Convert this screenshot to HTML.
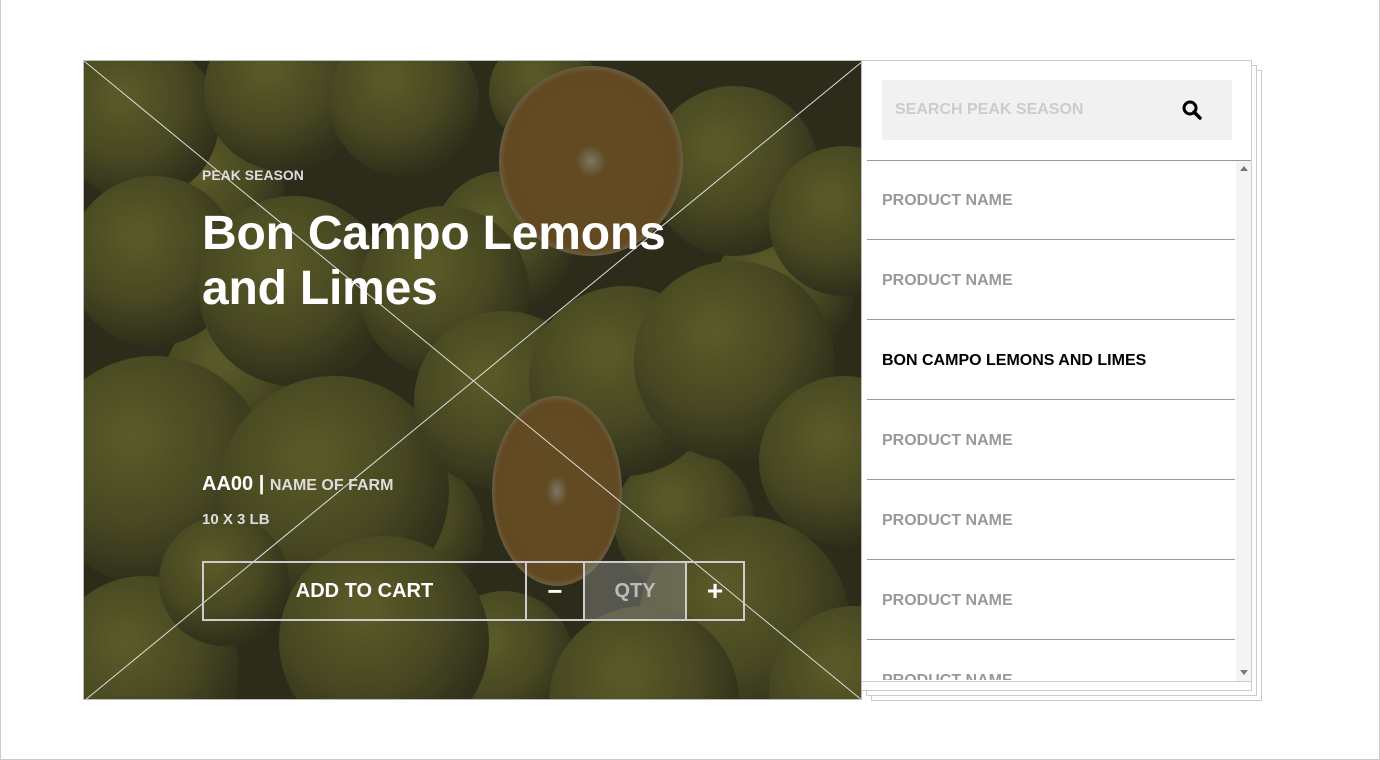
<!DOCTYPE html>
<html><head><meta charset="utf-8"><style>
*{margin:0;padding:0;box-sizing:border-box}
body{width:1380px;height:760px;background:#fff;position:relative;overflow:hidden;font-family:"Liberation Sans",Arial,sans-serif;font-weight:bold}
.frame{position:absolute;left:0;top:0;width:1380px;height:760px;border:1px solid #ccc;border-top:none}
.img{position:absolute;left:83px;top:60px;width:779px;height:640px;overflow:hidden;border:1px solid #bbb}
.t{position:absolute;color:#fff}
.sheet{position:absolute;background:#fff;border:1px solid #ccc}
.row{position:absolute;left:867px;width:368px;height:80px;border-top:1px solid #999;color:#999;font-size:16px;padding:32px 0 0 15px}
</style></head><body>
<div class="frame"></div>
<div class="sheet" style="left:871px;top:70px;width:391px;height:631px"></div>
<div class="sheet" style="left:866px;top:65px;width:391px;height:631px"></div>
<div class="sheet" style="left:861px;top:60px;width:391px;height:631px"></div>
<div class="img">
<svg width="779" height="640" viewBox="0 0 779 640" style="position:absolute;left:0;top:0">
<defs>
<radialGradient id="g" cx="40%" cy="35%" r="65%"><stop offset="0" stop-color="#66662e"/><stop offset="0.6" stop-color="#505026"/><stop offset="1" stop-color="#35351f"/></radialGradient>
<radialGradient id="o" cx="50%" cy="50%" r="55%"><stop offset="0" stop-color="#8a8470"/><stop offset="0.15" stop-color="#6e5428"/><stop offset="0.85" stop-color="#6e5226"/><stop offset="0.95" stop-color="#7a7a66"/><stop offset="1" stop-color="#3a3a28"/></radialGradient>
</defs>
<rect width="779" height="640" fill="#33321f"/>
<g fill="url(#g)">
<circle cx="130" cy="130" r="70"/><circle cx="420" cy="180" r="70"/><circle cx="330" cy="470" r="70"/><circle cx="150" cy="320" r="70"/><circle cx="600" cy="460" r="70"/><circle cx="700" cy="230" r="70"/><circle cx="420" cy="600" r="70"/>
<circle cx="55" cy="60" r="80"/><circle cx="200" cy="30" r="80"/><circle cx="320" cy="40" r="75"/>
<circle cx="650" cy="110" r="85"/><circle cx="760" cy="160" r="75"/><circle cx="70" cy="200" r="85"/>
<circle cx="210" cy="230" r="95"/><circle cx="360" cy="230" r="85"/><circle cx="70" cy="410" r="115"/>
<circle cx="250" cy="430" r="115"/><circle cx="420" cy="340" r="90"/><circle cx="540" cy="320" r="95"/>
<circle cx="650" cy="300" r="100"/><circle cx="760" cy="400" r="85"/><circle cx="300" cy="580" r="105"/>
<circle cx="60" cy="610" r="95"/><circle cx="660" cy="560" r="105"/><circle cx="560" cy="640" r="95"/>
<circle cx="770" cy="630" r="85"/><circle cx="460" cy="30" r="55"/><circle cx="140" cy="520" r="65"/>
</g>
<ellipse cx="507" cy="100" rx="92" ry="95" fill="url(#o)"/>
<ellipse cx="473" cy="430" rx="65" ry="95" fill="url(#o)"/>
<rect width="779" height="640" fill="#000" opacity="0.1"/>
<line x1="0" y1="0" x2="779" y2="640" stroke="#ddd" stroke-width="1"/>
<line x1="779" y1="0" x2="0" y2="640" stroke="#ddd" stroke-width="1"/>
</svg>
<div class="t" style="left:118px;top:106px;font-size:14px;color:#ddd">PEAK SEASON</div>
<div class="t" style="left:118px;top:145px;font-size:48px;line-height:55px;letter-spacing:-0.2px">Bon Campo Lemons<br>and Limes</div>
<div class="t" style="left:118px;top:412px;font-size:20px">AA00 | <span style="font-size:16px;color:#ddd">NAME OF FARM</span></div>
<div class="t" style="left:118px;top:450px;font-size:15px;color:#ddd">10 X 3 LB</div>
<div style="position:absolute;left:118px;top:500px;width:543px;height:60px;border:2px solid #ccc;display:flex;color:#fff">
<div style="width:323px;border-right:2px solid #ccc;display:flex;align-items:center;justify-content:center;font-size:20px">ADD TO CART</div>
<div style="width:58px;border-right:2px solid #ccc;display:flex;align-items:center;justify-content:center;font-size:26px">−</div>
<div style="width:102px;border-right:2px solid #ccc;background:rgba(140,140,140,0.45);display:flex;align-items:center;justify-content:center;font-size:20px;color:#bbb">QTY</div>
<div style="flex:1;display:flex;align-items:center;justify-content:center;font-size:28px">+</div>
</div>
</div>
<div style="position:absolute;left:882px;top:80px;width:350px;height:60px;background:#f1f1f1;color:#ccc;font-size:16px;padding:21px 0 0 13px">SEARCH PEAK SEASON</div>
<svg style="position:absolute;left:1180px;top:98px" width="24" height="24"><circle cx="10" cy="10" r="6" fill="none" stroke="#000" stroke-width="3"/><line x1="14" y1="14" x2="20" y2="20" stroke="#000" stroke-width="3.5" stroke-linecap="round"/></svg>
<div style="position:absolute;left:867px;top:160px;width:384px;border-top:1px solid #999"></div>
<div style="position:absolute;left:867px;top:161px;width:369px;height:519px;overflow:hidden">
<div class="row" style="left:0;top:-1px;border-top:none">PRODUCT NAME</div>
<div class="row" style="left:0;top:78px">PRODUCT NAME</div>
<div class="row" style="left:0;top:158px;color:#000">BON CAMPO LEMONS AND LIMES</div>
<div class="row" style="left:0;top:238px">PRODUCT NAME</div>
<div class="row" style="left:0;top:318px">PRODUCT NAME</div>
<div class="row" style="left:0;top:398px">PRODUCT NAME</div>
<div class="row" style="left:0;top:478px">PRODUCT NAME</div>
</div>
<div style="position:absolute;left:1236px;top:161px;width:15px;height:520px;background:#f4f4f4"></div>
<div style="position:absolute;left:1240px;top:166px;border-left:4px solid transparent;border-right:4px solid transparent;border-bottom:5px solid #777"></div>
<div style="position:absolute;left:1240px;top:670px;border-left:4px solid transparent;border-right:4px solid transparent;border-top:5px solid #777"></div>
<div style="position:absolute;left:862px;top:681px;width:389px;border-top:1px solid #ccc"></div>
</body></html>
